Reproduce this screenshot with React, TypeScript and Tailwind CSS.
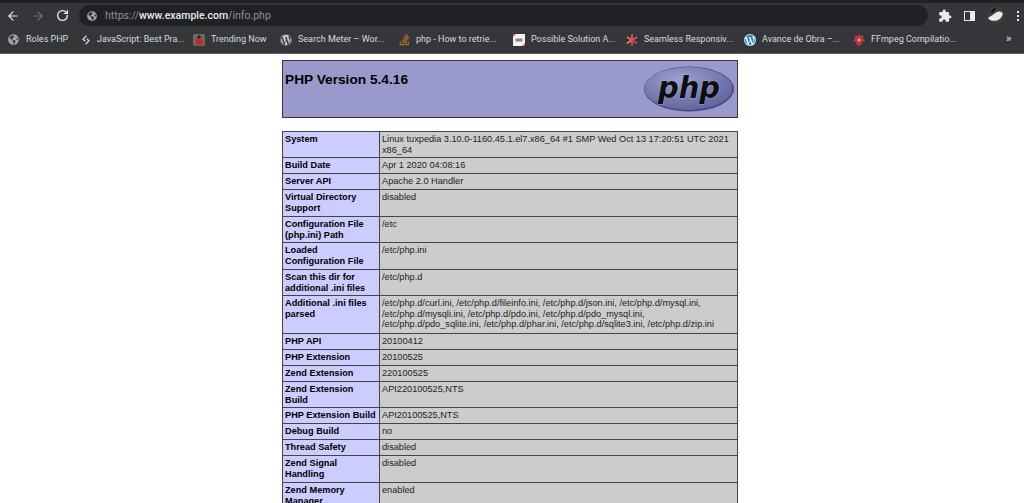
import { ArrowLeft, ArrowRight, RotateCw } from "lucide-react";
import { FaGlobeAmericas, FaWordpress, FaStackOverflow } from "react-icons/fa";
import { MdExtension } from "react-icons/md";

const Globe = () => <FaGlobeAmericas className="size-[11px] text-[#a3a5a9]" />;

const Diamond = () => (
  <svg viewBox="0 0 12 12" className="ml-[2px] size-[10px]" fill="none" stroke="#d8d9db" strokeWidth="1.6">
    <path d="M6.5 1 2.5 5l2.5 2.5M5.5 11l4-4L7 4.500" />
  </svg>
);

const Trending = () => (
  <svg viewBox="0 0 12 12" className="size-[12px]">
    <rect width="12" height="12" rx="2" fill="#6d6a68" />
    <circle cx="6" cy="3" r="1.800" fill="#2a2423" />
    <rect x="2.500" y="5" width="7" height="6" rx="1" fill="#c8261f" />
  </svg>
);

const Wp = () => (
  <span className="flex size-[12px] items-center justify-center rounded-full bg-[#35363a]">
    <FaWordpress className="size-[12px] text-[#c9cacc]" />
  </span>
);

const WpBlue = () => (
  <span className="flex size-[12px] items-center justify-center rounded-full bg-white">
    <FaWordpress className="size-[12px] text-[#2a7fb5]" />
  </span>
);

const So = () => <FaStackOverflow className="size-[13px] text-[#b9772f]" />;

const Possible = () => (
  <svg viewBox="0 0 12 12" className="size-[12px]">
    <rect width="12" height="12" fill="#f4f1f1" />
    <path d="M0 0h3L0 3zM12 12H9l3-3z" fill="#e0567a" />
    <rect x="2.500" y="4.500" width="7" height="3" fill="#8b7f80" />
  </svg>
);

const Star = () => (
  <svg viewBox="0 0 12 12" className="size-[12px]" strokeWidth="1.800" strokeLinecap="round">
    <path d="M6 1v4.500" stroke="#ef5a3c" />
    <path d="M1.500 3.500 6 6" stroke="#ef7a3c" />
    <path d="M10.500 3.500 6 6" stroke="#ee5050" />
    <path d="M6 6v5" stroke="#d8407a" />
    <path d="M6 6 1.500 9" stroke="#e08a40" />
    <path d="M6 6l4.500 3" stroke="#c0408a" />
  </svg>
);

const Ffmpeg = () => (
  <svg viewBox="0 0 12 12" className="size-[12px]">
    <path d="M6 0l1.500 2 3-.5-.5 3 2 2-2.500 1.500L8 11l-2 1-2-1-1.500-3L0 6.500l2-2-.5-3 3 .5z" fill="#b8383f" />
    <circle cx="6" cy="6" r="1.500" fill="#e9a0a0" />
  </svg>
);

const bookmarks = [
  { icon: <Globe />, label: "Roles PHP", box: "w-[71px]" },
  { icon: <Diamond />, label: "JavaScript: Best Pra...", box: "w-[114px]" },
  { icon: <Trending />, label: "Trending Now", box: "w-[87px]" },
  { icon: <Wp />, label: "Search Meter – Wor...", box: "w-[118px]" },
  { icon: <So />, label: "php - How to retrie...", box: "w-[115px]" },
  { icon: <Possible />, label: "Possible Solution A...", box: "w-[113px]" },
  { icon: <Star />, label: "Seamless Responsiv...", box: "w-[118px]" },
  { icon: <WpBlue />, label: "Avance de Obra –...", box: "w-[109px]" },
  { icon: <Ffmpeg />, label: "FFmpeg Compilatio...", box: "w-[110px]" },
];

type Row = { k: string; v: string; h: string };

const rows: Row[] = [
  { k: "System", v: "Linux tuxpedia 3.10.0-1160.45.1.el7.x86_64 #1 SMP Wed Oct 13 17:20:51 UTC 2021 x86_64", h: "h-[26px]" },
  { k: "Build Date", v: "Apr 1 2020 04:08:16", h: "h-[16px]" },
  { k: "Server API", v: "Apache 2.0 Handler", h: "h-[16px]" },
  { k: "Virtual Directory Support", v: "disabled", h: "h-[27px]" },
  { k: "Configuration File (php.ini) Path", v: "/etc", h: "h-[26px]" },
  { k: "Loaded Configuration File", v: "/etc/php.ini", h: "h-[27px]" },
  { k: "Scan this dir for additional .ini files", v: "/etc/php.d", h: "h-[26px]" },
  { k: "Additional .ini files parsed", v: "/etc/php.d/curl.ini, /etc/php.d/fileinfo.ini, /etc/php.d/json.ini, /etc/php.d/mysql.ini, /etc/php.d/mysqli.ini, /etc/php.d/pdo.ini, /etc/php.d/pdo_mysql.ini, /etc/php.d/pdo_sqlite.ini, /etc/php.d/phar.ini, /etc/php.d/sqlite3.ini, /etc/php.d/zip.ini", h: "h-[38px]" },
  { k: "PHP API", v: "20100412", h: "h-[16px]" },
  { k: "PHP Extension", v: "20100525", h: "h-[16px]" },
  { k: "Zend Extension", v: "220100525", h: "h-[16px]" },
  { k: "Zend Extension Build", v: "API220100525,NTS", h: "h-[26px]" },
  { k: "PHP Extension Build", v: "API20100525,NTS", h: "h-[16px]" },
  { k: "Debug Build", v: "no", h: "h-[16px]" },
  { k: "Thread Safety", v: "disabled", h: "h-[16px]" },
  { k: "Zend Signal Handling", v: "disabled", h: "h-[27px]" },
  { k: "Zend Memory Manager", v: "enabled", h: "h-[27px]" },
];

const PhpLogo = () => (
  <svg viewBox="0 0 92 48" className="h-[48px] w-[92px]">
    <defs>
      <radialGradient id="phpg" cx="0.4" cy="0.3" r="0.8">
        <stop offset="0" stopColor="#9da0d0" />
        <stop offset="0.6" stopColor="#7378b0" />
        <stop offset="1" stopColor="#5a5f96" />
      </radialGradient>
    </defs>
    <ellipse cx="46" cy="24" rx="45" ry="22.500" fill="#45487a" />
    <ellipse cx="45.500" cy="23.500" rx="44" ry="21.500" fill="url(#phpg)" />
    <text x="15" y="33" textLength="62" lengthAdjust="spacingAndGlyphs" fontFamily="'DejaVu Sans', sans-serif" fontWeight="700" fontStyle="italic" fontSize="31" fill="#0d0d12" stroke="#c9cbe6" strokeWidth="0.500" paintOrder="stroke">php</text>
  </svg>
);

export default function App() {
  return (
    <div className="flex h-[503px] w-[1024px] flex-col overflow-hidden bg-white">
      <div className="h-[3px] shrink-0 bg-[#202124]" />
      <div className="flex h-[25px] shrink-0 items-center bg-[#35363a] text-[#e8eaed]">
        <div className="flex w-[79px] items-center pl-[6px]">
          <ArrowLeft className="size-[14px]" strokeWidth={2} />
          <ArrowRight className="ml-[11px] size-[14px] text-[#6f7175]" strokeWidth={2} />
          <RotateCw className="ml-[11px] size-[13px]" strokeWidth={2.400} />
        </div>
        <div className="flex h-[21px] w-[849px] items-center rounded-full bg-[#202124] pl-[8px] text-[10.500px] [font-family:'Roboto',sans-serif]">
          <FaGlobeAmericas className="size-[10px] text-[#a3a5a9]" />
          <span className="ml-[8px] text-[#8f9195]">https://</span>
          <span className="font-medium text-[#e8eaed]">www.example.com</span>
          <span className="text-[#8f9195]">/info.php</span>
        </div>
        <div className="flex flex-1 items-center pl-[10px]">
          <MdExtension className="size-[14px] text-[#e8eaed]" />
          <div className="ml-[12px] flex h-[10px] w-[11px] justify-end border-[1.500px] border-[#e8eaed]">
            <div className="w-[4px] bg-[#e8eaed]" />
          </div>
          <svg viewBox="0 0 16 16" className="ml-[12px] size-[17px]">
            <circle cx="8" cy="8" r="8" fill="#3b3f3c" />
            <path d="M1 10c3-1 5-3 8-5 2-1 4-1 6 1-1 4-4 7-8 7-3 0-5-1-6-3z" fill="#eceae4" />
            <path d="M3 5c1-2 3-4 6-4l-3 4z" fill="#141614" />
          </svg>
          <div className="ml-[13px] flex flex-col gap-[2px]">
            <span className="size-[2px] bg-[#e8eaed]" />
            <span className="size-[2px] bg-[#e8eaed]" />
            <span className="size-[2px] bg-[#e8eaed]" />
          </div>
        </div>
      </div>
      <div className="flex h-[25px] shrink-0 items-center bg-[#35363a] pb-[2px] pl-[8px] text-[9px] text-[#d9dbde] [font-family:'Roboto',sans-serif]">
        {bookmarks.map((b) => (
          <div key={b.label} className={`flex items-center ${b.box}`}>
            <span className="flex w-[18px] shrink-0 items-center">{b.icon}</span>
            <span className="whitespace-nowrap">{b.label}</span>
          </div>
        ))}
        <span className="ml-[43px] text-[11px] font-semibold">»</span>
      </div>
      <div className="h-px shrink-0 bg-[#5b5c5f]" />
      <div className="flex flex-1 flex-col items-center pt-[6px] pr-[4px] text-black [font-family:'Liberation_Sans',Arial,sans-serif]">
        <div className="flex h-[58px] w-[456px] shrink-0 items-start justify-between border border-[#33333f] bg-[#9999cc] pl-[2px] pr-[2px]">
          <h1 className="mt-[10px] text-[13.700px] leading-[18px] font-bold">PHP Version 5.4.16</h1>
          <div className="mt-[4px]">
            <PhpLogo />
          </div>
        </div>
        <table className="mt-[13px] w-[456px] table-fixed border-collapse text-[9.200px] leading-[10.500px]">
          <colgroup>
            <col className="w-[97px]" />
            <col />
          </colgroup>
          <tbody>
            {rows.map((r) => (
              <tr key={r.k} className={r.h}>
                <td className="border border-[#444] bg-[#ccccff] px-[2px] py-[2px] align-top font-bold">{r.k}</td>
                <td className="border border-[#444] bg-[#cccccc] px-[2px] py-[2px] align-top text-[#222]">{r.v}</td>
              </tr>
            ))}
          </tbody>
        </table>
      </div>
    </div>
  );
}
